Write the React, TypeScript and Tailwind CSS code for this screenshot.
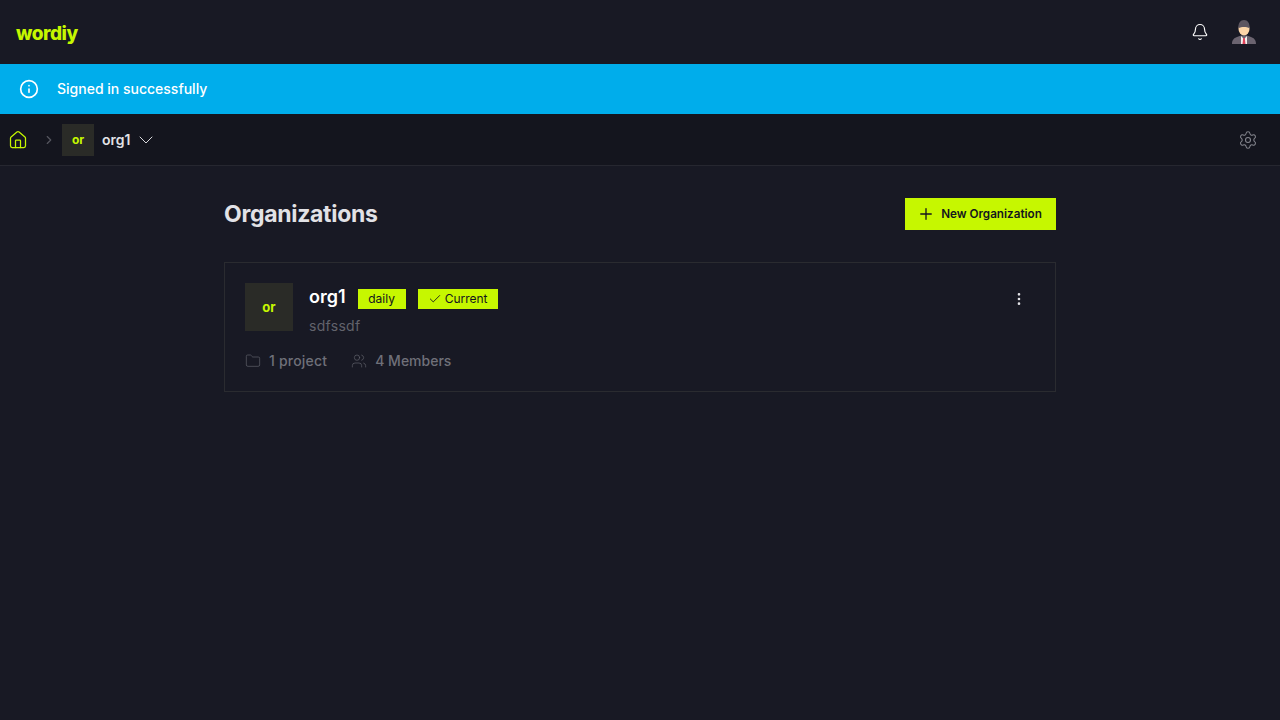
import { Bell, Check, ChevronDown, ChevronRight, EllipsisVertical, Folder, Home, Info, Plus, Settings, Users } from 'lucide-react';

const font = { fontFamily: '"Inter", "Noto Sans", sans-serif' };

function Avatar() {
  return (
    <svg width="26" height="26" viewBox="0 0 26 26">
      <path d="M1 25c0-4 2-6 5-7l4-1.500h6l4 1.500c3 1 5 3 5 7z" fill="#6b6470" />
      <path d="M10 17l3 3 3-3v8h-6z" fill="#f4f1ee" />
      <path d="M12.200 19h1.600l.7 6h-3z" fill="#e2445c" />
      <ellipse cx="13" cy="10" rx="5.500" ry="6.500" fill="#fcd5a8" />
      <path d="M7.500 9c-.5-5 2-8 5.500-8s6 3 5.500 8c-3-1.500-8-1.500-11 0z" fill="#5d5660" />
    </svg>
  );
}

export default function App() {
  return (
    <div className="min-h-[720px] bg-[#181924] text-white" style={font}>
      <header className="flex h-16 items-center justify-between pl-4 pr-[23px]">
        <span className="pt-[3px] text-[19px] font-extrabold leading-none tracking-[-0.5px] text-[#c6f700]">wordiy</span>
        <div className="flex items-center gap-[22px]">
          <Bell className="h-[18px] w-[18px] text-white" strokeWidth={1.5} />
          <Avatar />
        </div>
      </header>

      <div className="flex h-[50px] items-center gap-[18px] bg-[#00adeb] pl-[19px]">
        <Info className="h-5 w-5" strokeWidth={2} />
        <span className="text-sm font-medium">Signed in successfully</span>
      </div>

      <nav className="flex h-[52px] items-center justify-between border-b border-[#262730] bg-[#14151e] pl-2 pr-[22px]">
        <div className="flex items-center">
          <Home className="h-5 w-5 text-[#c6f700]" strokeWidth={1.5} />
          <ChevronRight className="ml-[14px] h-[14px] w-[14px] text-[#55565f]" />
          <div className="ml-[6px] flex h-8 w-8 items-center justify-center bg-[#2a2b27] text-xs font-bold text-[#c6f700]">or</div>
          <span className="ml-2 text-sm font-semibold text-[#e2e2e6]">org1</span>
          <ChevronDown className="ml-1 h-6 w-6 text-[#d8d8dc]" strokeWidth={1} />
        </div>
        <Settings className="h-5 w-5 text-[#85868e]" strokeWidth={1.25} />
      </nav>

      <main className="mx-auto w-[832px] pt-8">
        <div className="flex items-center justify-between">
          <h1 className="text-[23px] font-bold leading-8 tracking-[-0.3px] text-[#e2e2e6]">Organizations</h1>
          <button className="flex h-8 w-[151px] items-center justify-center gap-[6px] bg-[#c6f700] pt-px text-[11.700px] font-semibold text-[#14151e]">
            <Plus className="-ml-[2px] -mt-px h-[18px] w-[18px]" strokeWidth={1.75} />
            New Organization
          </button>
        </div>

        <section className="mt-8 h-[130px] border border-[#2a2b30] pl-5 pr-7 pt-5">
          <div className="flex items-start justify-between">
            <div className="flex gap-4">
              <div className="flex h-12 w-12 items-center justify-center bg-[#2a2b27] pt-[2px] text-[13px] font-bold text-[#c6f700]">or</div>
              <div>
                <div className="flex h-8 items-center">
                  <span className="mb-1 text-lg font-semibold text-white">org1</span>
                  <span className="ml-3 flex h-5 w-12 items-center justify-center bg-[#c6f700] text-xs text-[#14151e]">daily</span>
                  <span className="ml-3 flex h-5 w-20 items-center justify-center gap-[3px] bg-[#c6f700] text-xs text-[#14151e]">
                    <Check className="h-[14px] w-[14px]" strokeWidth={1.5} />
                    Current
                  </span>
                </div>
                <p className="mt-[1px] text-sm tracking-[0.3px] text-[#62636c]">sdfssdf</p>
              </div>
            </div>
            <EllipsisVertical className="mt-[8px] h-4 w-4 text-[#e2e2e6]" strokeWidth={2} />
          </div>
          <div className="mt-[15px] flex items-center text-sm font-medium text-[#6f7079]">
            <Folder className="h-4 w-4 text-[#62636c]" strokeWidth={1} />
            <span className="ml-2 tracking-[0.2px]">1 project</span>
            <Users className="ml-6 h-4 w-4 text-[#62636c]" strokeWidth={1} />
            <span className="ml-2">4 Members</span>
          </div>
        </section>
      </main>
    </div>
  );
}
